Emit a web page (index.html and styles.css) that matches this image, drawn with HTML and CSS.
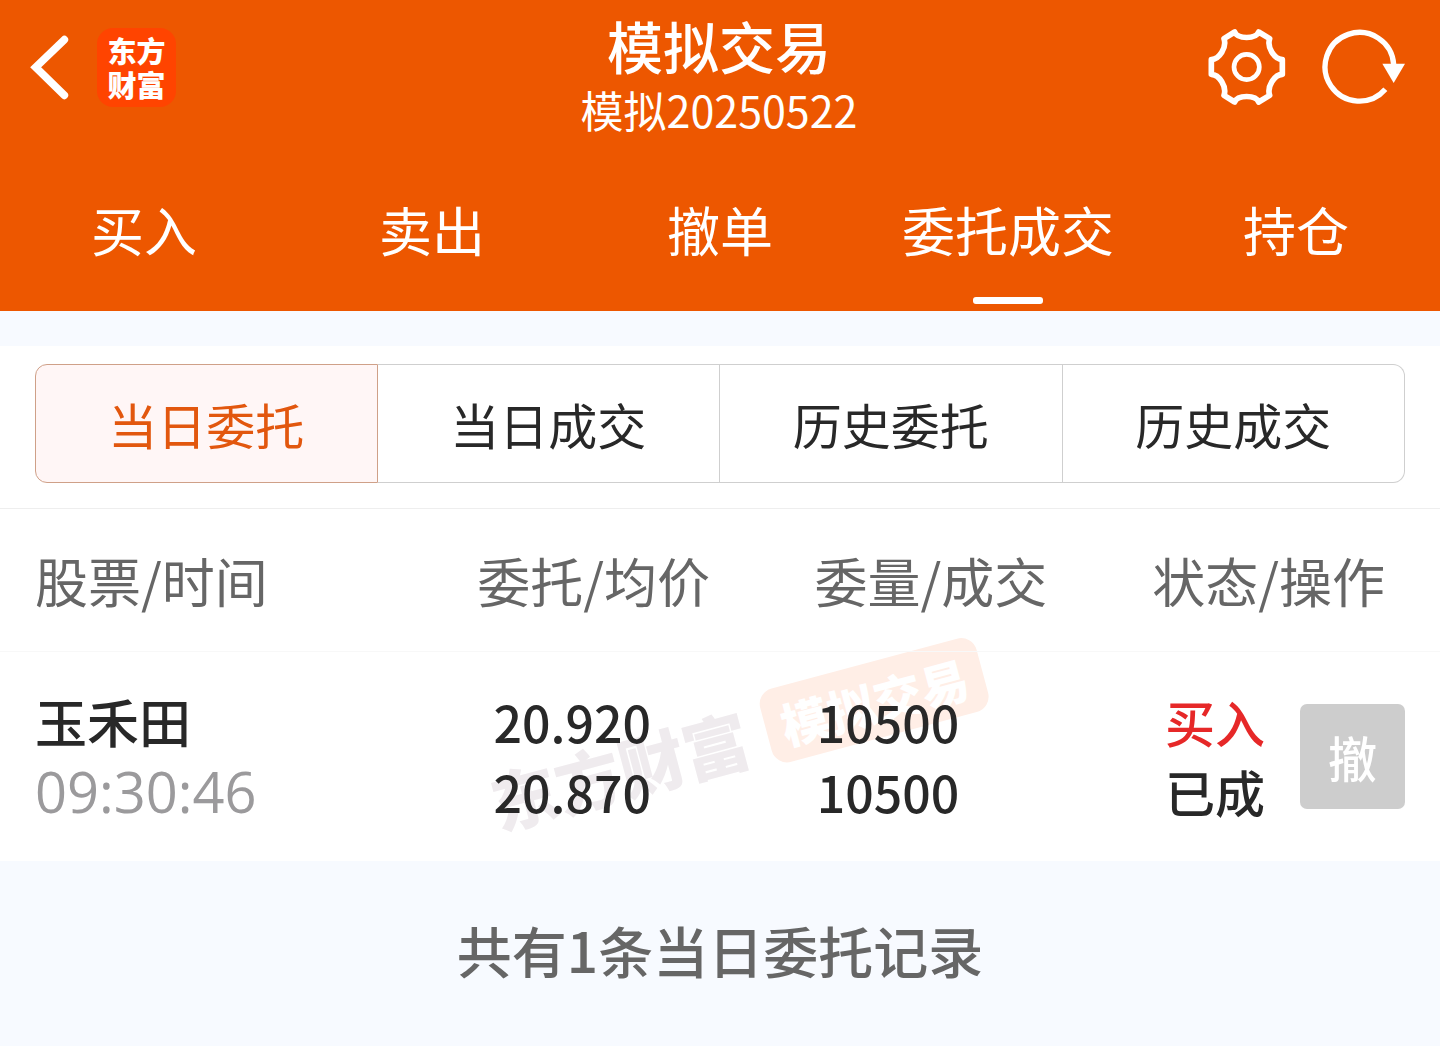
FILE: index.html
```html
<!DOCTYPE html>
<html lang="zh-CN">
<head>
    <meta charset="UTF-8">
    <meta name="viewport" content="width=device-width, initial-scale=1.0">
    <title>模拟交易</title>
    <link rel="stylesheet" href="styles.css">
</head>
<body>
    <header class="header">
        <div class="topbar">
            <div class="topbar-left">
                <button class="icon-btn" type="button" aria-label="返回">
                    <svg width="40" height="72" viewBox="90 90 120 216" fill="none" stroke="#fff" stroke-width="23" stroke-linecap="round">
                        <path d="M193 116L107 199L193 283" />
                    </svg>
                </button>
                <a class="logo" href="#">东方<br>财富</a>
            </div>
            <div class="topbar-title">
                <h1>模拟交易</h1>
                <p>模拟20250522</p>
            </div>
            <div class="topbar-right">
                <button class="icon-btn" type="button" aria-label="设置">
                    <svg width="80" height="80" viewBox="80 80 240 240" fill="none" stroke="#fff" stroke-width="17" stroke-linejoin="round">
                        <path d="M163 95C172 117 226 117 235 95L268 115C259 141 282 177 306 178V222C282 223 259 259 268 285L235 305C226 283 172 283 163 305L131 285C140 259 117 223 93 222V178C117 177 140 141 131 115Z" />
                        <circle cx="199" cy="200" r="38" stroke-width="14" />
                    </svg>
                </button>
                <button class="icon-btn" type="button" aria-label="刷新">
                    <svg width="88" height="80" viewBox="420 80 264 240" fill="none" stroke="#fff" stroke-width="16">
                        <path d="M616 267A103 103 0 1 1 641 192" />
                        <path d="M607 190H675L641 248Z" fill="#fff" stroke="none" />
                    </svg>
                </button>
            </div>
        </div>
        <nav class="tabs">
            <a href="#">买入</a>
            <a href="#">卖出</a>
            <a href="#">撤单</a>
            <a href="#" class="active">委托成交</a>
            <a href="#">持仓</a>
        </nav>
    </header>

    <main>
        <div class="filter">
            <button type="button" class="active">当日委托</button>
            <button type="button">当日成交</button>
            <button type="button">历史委托</button>
            <button type="button">历史成交</button>
        </div>

        <div class="orders">
            <div class="watermark" aria-hidden="true">
                <span class="watermark-name">东方财富</span>
                <span class="watermark-badge">模拟交易</span>
            </div>
            <table>
                <thead>
                    <tr>
                        <th class="col-stock">股票/时间</th>
                        <th class="col-price">委托/均价</th>
                        <th class="col-amount">委量/成交</th>
                        <th class="col-status">状态/操作</th>
                    </tr>
                </thead>
                <tbody>
                    <tr>
                        <td class="col-stock">
                            <div class="name">玉禾田</div>
                            <div class="time">09:30:46</div>
                        </td>
                        <td class="col-price">
                            <div>20.920</div>
                            <div>20.870</div>
                        </td>
                        <td class="col-amount">
                            <div>10500</div>
                            <div>10500</div>
                        </td>
                        <td class="col-status">
                            <div class="status">
                                <div>
                                    <div class="buy">买入</div>
                                    <div>已成</div>
                                </div>
                                <button type="button" class="cancel" disabled>撤</button>
                            </div>
                        </td>
                    </tr>
                </tbody>
            </table>
        </div>

        <p class="summary">共有1条当日委托记录</p>
    </main>
</body>
</html>
```
FILE: styles.css
```css
* {
    box-sizing: border-box;
}

body {
    margin: 0;
    background-color: #f7faff;
    color: #282828;
    font-family: "Noto Sans CJK SC", sans-serif;
}

button {
    font-family: inherit;
    cursor: pointer;
}

a {
    color: inherit;
    text-decoration: none;
}

/* Header */
.header {
    background-color: #ed5700;
    color: #fff;
}

.topbar {
    display: grid;
    grid-template-columns: 1fr auto 1fr;
    align-items: start;
    padding: 0 32px 0 30px;
}

.topbar-left,
.topbar-right {
    display: flex;
    align-items: center;
    height: 134px;
}

.topbar-left {
    gap: 27px;
}

.topbar-right {
    justify-content: flex-end;
    gap: 33px;
}

.icon-btn {
    padding: 0;
    border: none;
    background: none;
}

.icon-btn svg {
    display: block;
}

.logo {
    display: flex;
    align-items: center;
    justify-content: center;
    width: 79px;
    height: 79px;
    border-radius: 16px;
    background-color: #ff4400;
    font-size: 29px;
    font-weight: 900;
    line-height: 34px;
}

.topbar-title {
    padding-top: 13px;
    text-align: center;
}

.topbar-title h1 {
    margin: 0;
    font-size: 56px;
    font-weight: 500;
    line-height: 64px;
}

.topbar-title p {
    margin: 0;
    font-size: 43px;
    line-height: 64px;
}

.tabs {
    display: grid;
    grid-template-columns: repeat(5, 1fr);
    margin-top: 14px;
}

.tabs a {
    position: relative;
    padding-bottom: 8px;
    font-size: 53px;
    line-height: 148px;
    text-align: center;
}

.tabs a.active::after {
    content: "";
    position: absolute;
    left: 50%;
    bottom: 7px;
    width: 70px;
    height: 7px;
    margin-left: -35px;
    border-radius: 3px;
    background-color: #fff;
}

/* Sub tabs */
.filter {
    display: grid;
    grid-template-columns: repeat(4, 1fr);
    margin-top: 35px;
    padding: 18px 35px 25px;
    border-bottom: 1px solid #eeeeee;
    background-color: #fff;
}

.filter button {
    height: 119px;
    padding: 0;
    border: 1px solid #cfcfcf;
    border-left: none;
    background-color: #fff;
    color: #282828;
    font-size: 49px;
}

.filter button:first-child {
    border-left: 1px solid #cfcfcf;
    border-radius: 12px 0 0 12px;
}

.filter button:last-child {
    border-radius: 0 12px 12px 0;
}

.filter button.active {
    border-color: #cfa088;
    background-color: #fff6f6;
    color: #e2570e;
}

/* Orders */
.orders {
    position: relative;
    background-color: #fff;
}

table {
    position: relative;
    width: 100%;
    table-layout: fixed;
    border-collapse: collapse;
}

th {
    height: 142px;
    padding: 0;
    border-bottom: 1px solid #f8f8f8;
    color: #666;
    font-size: 53px;
    font-weight: 400;
    text-align: right;
}

td {
    height: 210px;
    padding: 0;
    font-size: 50px;
    font-weight: 500;
    line-height: 70px;
    text-align: right;
}

.col-stock {
    width: 25%;
    padding-left: 35px;
    text-align: left;
}

th.col-price {
    width: 25%;
    padding-right: 10px;
}

th.col-amount {
    width: 23%;
    padding-right: 4px;
}

th.col-status {
    width: 27%;
    padding-right: 55px;
}

td.col-price {
    padding-right: 69px;
}

td.col-amount {
    padding-right: 92px;
}

td.col-status {
    padding-right: 35px;
}

.name {
    font-size: 52px;
}

.time {
    color: #9b9a9c;
    font-family: "Open Sans", sans-serif;
    font-size: 56px;
    font-weight: 400;
}

.status {
    display: flex;
    align-items: center;
    justify-content: flex-end;
    gap: 35px;
}

.buy {
    color: #e62828;
}

.cancel {
    width: 105px;
    height: 105px;
    padding: 0;
    border: none;
    border-radius: 7px;
    background-color: #cdcdcd;
    color: #fff;
    font-size: 49px;
    font-weight: 500;
}

/* Watermark behind the table */
.watermark {
    position: absolute;
    top: 50%;
    left: 50%;
    display: flex;
    align-items: center;
    gap: 20px;
    margin: 52px 0 0 17px;
    transform: translate(-50%, -50%) rotate(-15deg);
    font-weight: 900;
    white-space: nowrap;
    pointer-events: none;
}

.watermark-name {
    color: #efebee;
    font-size: 66px;
}

.watermark-badge {
    padding: 0 16px;
    border-radius: 16px;
    background-color: #ffeee6;
    color: #fff;
    font-size: 48px;
    line-height: 76px;
}

.summary {
    margin: 0;
    padding: 48px 0 56px;
    color: #666;
    font-size: 55px;
    font-weight: 500;
    line-height: 80px;
    text-align: center;
}
```
